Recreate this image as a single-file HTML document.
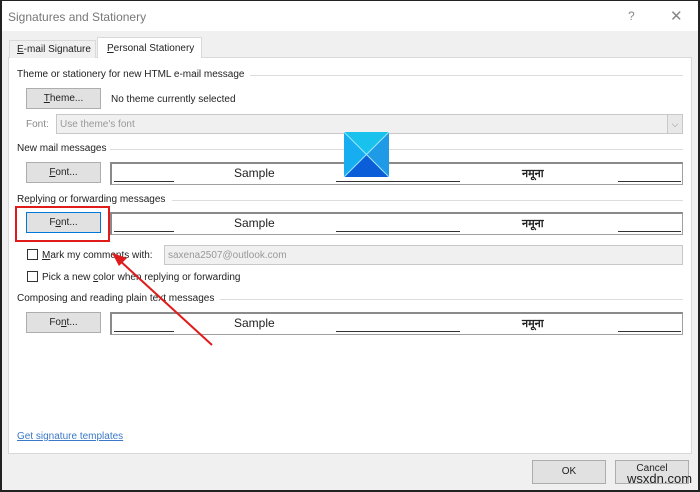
<!DOCTYPE html>
<html><head><meta charset="utf-8"><style>
*{box-sizing:border-box;margin:0;padding:0}
body{width:700px;height:492px;overflow:hidden;font-family:"Liberation Sans",sans-serif;font-size:10px;color:#222;position:relative;background:#f0f0f0}
.a{position:absolute}
.frame{left:0;top:0;width:700px;height:492px;border:2px solid #222;border-top:1px solid #222}
.btn{position:absolute;background:#e1e1e1;border:1px solid #adadad;text-align:center;font-size:10px;line-height:19px}
.lbl{position:absolute;font-size:10px;white-space:nowrap}
.hr{position:absolute;height:1px;background:#dcdcdc}
.samp{position:absolute;left:110px;width:573px;height:23px;background:#fff;border:1px solid #a0a0a0;border-top:2px solid #8a8a8a;border-left:2px solid #8a8a8a}
.samp .l{position:absolute;height:1px;background:#333;top:17px}
.samp .t{position:absolute;top:2px;font-size:12px}
.cb{position:absolute;width:11px;height:11px;border:1px solid #333;background:#fff}
</style></head><body>
<div class="a" style="left:0;top:0;width:700px;height:31px;background:#fff"></div>
<div class="lbl" style="left:8px;top:10px;font-size:12px;color:#777">Signatures and Stationery</div>
<div class="lbl" style="left:628px;top:9px;font-size:12px;color:#888">?</div>
<div class="lbl" style="left:670px;top:7px;font-size:15px;color:#888">✕</div>
<div class="a" style="left:8px;top:57px;width:684px;height:397px;background:#fff;border:1px solid #d9d9d9"></div>
<div class="a" style="left:9px;top:40px;width:87px;height:18px;background:#f0f0f0;border:1px solid #d9d9d9;border-bottom:none"></div>
<div class="lbl" style="left:17px;top:44px"><u>E</u>-mail Signature</div>
<div class="a" style="left:97px;top:37px;width:105px;height:21px;background:#fff;border:1px solid #d9d9d9;border-bottom:none"></div>
<div class="lbl" style="left:107px;top:43px"><u>P</u>ersonal Stationery</div>

<div class="lbl" style="left:17px;top:69px">Theme or stationery for new HTML e-mail message</div>
<div class="hr" style="left:250px;top:75px;width:433px"></div>
<div class="btn" style="left:26px;top:88px;width:75px;height:21px"><u>T</u>heme...</div>
<div class="lbl" style="left:111px;top:94px">No theme currently selected</div>
<div class="lbl" style="left:26px;top:119px;color:#888">Font:</div>
<div class="a" style="left:56px;top:114px;width:627px;height:20px;background:#f0f0f0;border:1px solid #c8c8c8"></div>
<div class="lbl" style="left:60px;top:119px;color:#999">Use theme's font</div>
<div class="a" style="left:667px;top:115px;width:15px;height:18px;border-left:1px solid #c8c8c8;background:#e8e8e8;color:#888;font-size:9px;text-align:center;line-height:18px">⌵</div>

<div class="lbl" style="left:17px;top:143px">New mail messages</div>
<div class="hr" style="left:110px;top:149px;width:573px"></div>
<div class="btn" style="left:26px;top:162px;width:75px;height:21px"><u>F</u>ont...</div>
<div class="samp" style="top:162px"><div class="l" style="left:2px;width:60px"></div><div class="t" style="left:122px">Sample</div><div class="l" style="left:224px;width:124px"></div><div class="t" style="left:410px;font-family:'DejaVu Sans',sans-serif;font-weight:bold;font-size:11px">नमूना</div><div class="l" style="left:506px;width:63px"></div></div>
<svg class="a" style="left:344px;top:132px" width="45" height="45"><rect width="45" height="45" fill="#1e9ae6"/><polygon points="0,0 45,0 22.5,22.5" fill="#19c2ec"/><polygon points="0,45 45,45 22.5,22.5" fill="#0b5ed8"/><polygon points="0,0 0,45 22.5,22.5" fill="#16aef0"/><line x1="0" y1="0" x2="45" y2="45" stroke="#9ee6ff"/><line x1="45" y1="0" x2="0" y2="45" stroke="#9ee6ff"/></svg>

<div class="lbl" style="left:17px;top:194px">Replying or forwarding messages</div>
<div class="hr" style="left:172px;top:200px;width:511px"></div>
<div class="btn" style="left:26px;top:212px;width:75px;height:21px;border:1px solid #0078d7">F<u>o</u>nt...</div>
<div class="a" style="left:15px;top:206px;width:95px;height:36px;border:2px solid #e01b1b"></div>
<div class="samp" style="top:212px"><div class="l" style="left:2px;width:60px"></div><div class="t" style="left:122px">Sample</div><div class="l" style="left:224px;width:124px"></div><div class="t" style="left:410px;font-family:'DejaVu Sans',sans-serif;font-weight:bold;font-size:11px">नमूना</div><div class="l" style="left:506px;width:63px"></div></div>
<div class="cb" style="left:27px;top:249px"></div>
<div class="lbl" style="left:42px;top:250px"><u>M</u>ark my comments with:</div>
<div class="a" style="left:164px;top:245px;width:519px;height:20px;background:#f0f0f0;border:1px solid #c8c8c8"></div>
<div class="lbl" style="left:168px;top:250px;color:#999">saxena2507@outlook.com</div>
<div class="cb" style="left:27px;top:271px"></div>
<div class="lbl" style="left:42px;top:272px">Pick a new <u>c</u>olor when replying or forwarding</div>

<div class="lbl" style="left:17px;top:293px">Composing and reading plain text messages</div>
<div class="hr" style="left:220px;top:299px;width:463px"></div>
<div class="btn" style="left:26px;top:312px;width:75px;height:21px">Fo<u>n</u>t...</div>
<div class="samp" style="top:312px"><div class="l" style="left:2px;width:60px"></div><div class="t" style="left:122px">Sample</div><div class="l" style="left:224px;width:124px"></div><div class="t" style="left:410px;font-family:'DejaVu Sans',sans-serif;font-weight:bold;font-size:11px">नमूना</div><div class="l" style="left:506px;width:63px"></div></div>

<svg class="a" style="left:0;top:0" width="700" height="492"><line x1="212" y1="345" x2="118" y2="259" stroke="#e01b1b" stroke-width="2"/><polygon points="112,253 127,258 119,266" fill="#e01b1b"/></svg>

<div class="lbl" style="left:17px;top:431px;color:#3a78c9;text-decoration:underline">Get signature templates</div>
<div class="btn" style="left:532px;top:460px;width:74px;height:24px;line-height:22px">OK</div>
<div class="btn" style="left:615px;top:460px;width:74px;height:24px;line-height:16px">Cancel</div>
<div class="lbl" style="left:627px;top:471px;font-size:13px;color:#222">wsxdn.com</div>
<div class="a frame"></div>
</body></html>
